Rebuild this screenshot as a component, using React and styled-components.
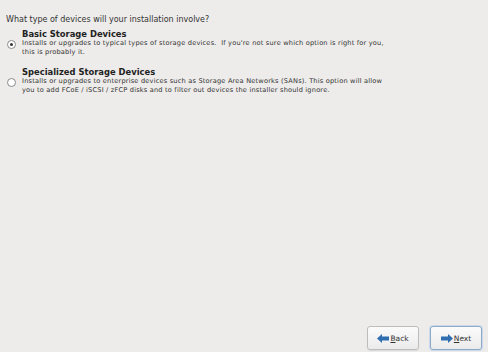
import React from 'react';
import styled, { createGlobalStyle } from 'styled-components';

const GlobalStyle = createGlobalStyle`
    html, body {
        margin: 0;
        padding: 0;
        background: #ffffff;
    }
    body {
        font-family: 'DejaVu Sans', 'Liberation Sans', sans-serif;
        color: #2e2e2e;
    }
`;

const Screen = styled.div`
    width: 488px;
    height: 360px;
    display: flex;
    flex-direction: column;
    background: #ffffff;
`;

const Panel = styled.div`
    height: 352px;
    background: #edecea;
    display: flex;
    flex-direction: column;
    box-sizing: border-box;
    padding: 15px 6px 0 6px;
`;

const Question = styled.div`
    font-size: 8px;
    line-height: 10px;
    color: #333;
    margin-bottom: 4px;
`;

const Options = styled.div`
    display: flex;
    flex-direction: column;
    gap: 10px;
`;

const Option = styled.label`
    display: grid;
    grid-template-columns: 16px 1fr;
`;

const Heading = styled.div`
    grid-column: 2;
    font-size: 8.4px;
    line-height: 10px;
    font-weight: bold;
    color: #222;
`;

const RadioCell = styled.div`
    grid-column: 1;
    padding-top: 1px;
`;

const Radio = styled.span`
    display: block;
    width: 7px;
    height: 7px;
    border-radius: 50%;
    border: 1px solid #8a8a8a;
    background: #ffffff;
    position: relative;
    margin-left: 1px;

    &::after {
        content: '';
        display: ${p => (p.checked ? 'block' : 'none')};
        position: absolute;
        left: 2px;
        top: 2px;
        width: 3px;
        height: 3px;
        border-radius: 50%;
        background: #333;
    }
`;

const Desc = styled.div`
    grid-column: 2;
    font-size: 6.6px;
    letter-spacing: 0.2px;
    line-height: 9px;
    color: #333;
    white-space: pre;
`;

const Spacer = styled.div`
    flex: 1;
`;

const ButtonBar = styled.div`
    display: flex;
    justify-content: flex-end;
    gap: 11px;
    padding: 0 0 2px 0;
`;

const Button = styled.div`
    width: 52px;
    height: 24px;
    box-sizing: border-box;
    border: 1px solid ${p => (p.primary ? '#8fa9c8' : '#bdbdbd')};
    border-radius: 3px;
    background: linear-gradient(#fbfbfb, #ebebeb);
    display: flex;
    align-items: center;
    justify-content: center;
    gap: 1px;
    font-size: 7.5px;
    color: #333;
    box-shadow: ${p => (p.primary ? '0 0 0 1px #c9d9ec' : '0 1px 1px rgba(0,0,0,0.08)')};
`;

const Mnemonic = styled.span`
    text-decoration: underline;
`;

const Arrow = ({ dir }) => (
    <svg width="12" height="9" viewBox="0 0 12 9">
        <path
            d={dir === 'left'
                ? 'M0 4.5 L5 0 L5 2.5 L12 2.5 L12 6.5 L5 6.5 L5 9 Z'
                : 'M12 4.5 L7 0 L7 2.5 L0 2.5 L0 6.5 L7 6.5 L7 9 Z'}
            fill="#2f6fb0"
        />
    </svg>
);

const options = [
    {
        title: 'Basic Storage Devices',
        lines: [
            "Installs or upgrades to typical types of storage devices.  If you're not sure which option is right for you,",
            'this is probably it.',
        ],
        checked: true,
    },
    {
        title: 'Specialized Storage Devices',
        lines: [
            'Installs or upgrades to enterprise devices such as Storage Area Networks (SANs). This option will allow',
            'you to add FCoE / iSCSI / zFCP disks and to filter out devices the installer should ignore.',
        ],
        checked: false,
    },
];

const App = () => {
    return (
        <>
            <GlobalStyle />
            <Screen>
                <Panel>
                    <Question>What type of devices will your installation involve?</Question>
                    <Options>
                        {options.map(o => (
                            <Option key={o.title}>
                                <Heading>{o.title}</Heading>
                                <RadioCell>
                                    <Radio checked={o.checked} />
                                </RadioCell>
                                <Desc>
                                    {o.lines.map(l => (
                                        <div key={l}>{l}</div>
                                    ))}
                                </Desc>
                            </Option>
                        ))}
                    </Options>
                    <Spacer />
                    <ButtonBar>
                        <Button>
                            <Arrow dir="left" />
                            <span><Mnemonic>B</Mnemonic>ack</span>
                        </Button>
                        <Button primary>
                            <Arrow dir="right" />
                            <span><Mnemonic>N</Mnemonic>ext</span>
                        </Button>
                    </ButtonBar>
                </Panel>
            </Screen>
        </>
    );
};

export default App;
